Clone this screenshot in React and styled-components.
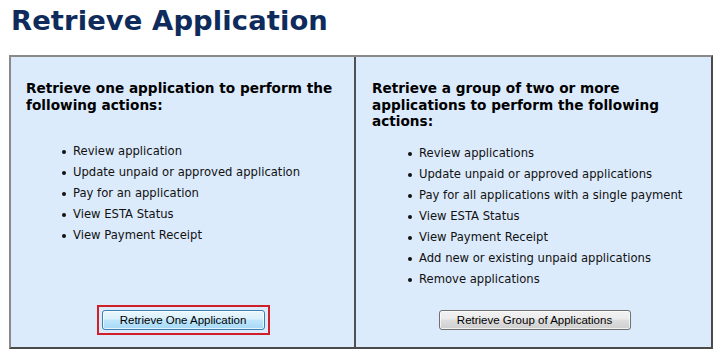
import React from "react";
import styled, { createGlobalStyle } from "styled-components";

const Global = createGlobalStyle`
  html, body {
    margin: 0;
    padding: 0;
    background: #ffffff;
  }
  body {
    font-family: "DejaVu Sans", Verdana, sans-serif;
    color: #000;
  }
`;

const Page = styled.div`
  width: 720px;
  height: 357px;
  box-sizing: border-box;
  padding: 4px 7px 0 9px;
  overflow: hidden;
`;

const Title = styled.h1`
  margin: 0 0 0 2px;
  font-family: "DejaVu Sans", Verdana, sans-serif;
  font-weight: bold;
  font-size: 27.4px;
  line-height: 34px;
  color: #0e2b5c;
  letter-spacing: 0.1px;
`;

const Board = styled.div`
  margin-top: 17px;
  height: 294px;
  box-sizing: border-box;
  display: grid;
  grid-template-columns: 343px 1fr;
  border-top: 2px solid #8a8a8a;
  border-left: 2px solid #8a8a8a;
  border-right: 2px solid #4a4a4a;
  border-bottom: 2px solid #4a4a4a;
  background: #dcebfc;
`;

const Cell = styled.section`
  display: flex;
  flex-direction: column;
  padding: 23px 14px 12px ${(p) => (p.$divided ? 16 : 15)}px;
  border-left: ${(p) => (p.$divided ? "2px solid #505050" : "none")};
`;

const Heading = styled.h2`
  margin: 0;
  height: ${(p) => p.$h}px;
  font-family: "DejaVu Sans", Verdana, sans-serif;
  font-weight: bold;
  font-size: 13.65px;
  line-height: 16.5px;
  color: #000;
`;

const Actions = styled.ul`
  margin: 0;
  padding: 0 0 0 47px;
  list-style: none;
`;

const Action = styled.li`
  position: relative;
  font-size: 11.6px;
  line-height: 21px;
  color: #111;
  &::before {
    content: "";
    position: absolute;
    left: -11px;
    top: 9px;
    width: 4px;
    height: 4px;
    border-radius: 50%;
    background: #111;
  }
`;

const ButtonRow = styled.div`
  margin-top: auto;
  display: flex;
  justify-content: center;
`;

const Focus = styled.div`
  padding: 3px;
  border: 2px solid ${(p) => (p.$on ? "#d01f26" : "transparent")};
`;

const Button = styled.button`
  display: block;
  width: ${(p) => p.$w}px;
  height: 20px;
  padding: 0;
  border: 1px solid ${(p) => (p.$active ? "#3c7fb1" : "#707070")};
  border-radius: 3px;
  font-family: "Liberation Sans", Arial, sans-serif;
  font-size: 11.5px;
  color: #000;
  background: ${(p) =>
    p.$active
      ? "linear-gradient(#eaf6fd 0%, #d9f0fc 45%, #bee6fd 50%, #a7d9f5 100%)"
      : "linear-gradient(#f2f2f2 0%, #ebebeb 45%, #dddddd 50%, #cfcfcf 100%)"};
  box-shadow: inset 0 0 0 1px rgba(255, 255, 255, 0.7);
`;

const left = [
  "Review application",
  "Update unpaid or approved application",
  "Pay for an application",
  "View ESTA Status",
  "View Payment Receipt",
];

const right = [
  "Review applications",
  "Update unpaid or approved applications",
  "Pay for all applications with a single payment",
  "View ESTA Status",
  "View Payment Receipt",
  "Add new or existing unpaid applications",
  "Remove applications",
];

export default function App() {
  return (
    <>
      <Global />
      <Page>
        <Title>Retrieve Application</Title>
        <Board>
          <Cell>
            <Heading $h={61}>Retrieve one application to perform the following actions:</Heading>
            <Actions>
              {left.map((t) => (
                <Action key={t}>{t}</Action>
              ))}
            </Actions>
            <ButtonRow>
              <Focus $on>
                <Button $w={163} $active>Retrieve One Application</Button>
              </Focus>
            </ButtonRow>
          </Cell>
          <Cell $divided>
            <Heading $h={63}>Retrieve a group of two or more applications to perform the following actions:</Heading>
            <Actions>
              {right.map((t) => (
                <Action key={t}>{t}</Action>
              ))}
            </Actions>
            <ButtonRow>
              <Focus>
                <Button $w={192}>Retrieve Group of Applications</Button>
              </Focus>
            </ButtonRow>
          </Cell>
        </Board>
      </Page>
    </>
  );
}
